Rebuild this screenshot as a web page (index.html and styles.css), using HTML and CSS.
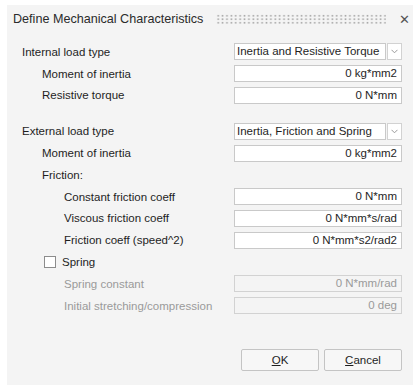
FILE: index.html
```html
<!DOCTYPE html>
<html lang="en">
<head>
    <meta charset="UTF-8">
    <title>Define Mechanical Characteristics</title>
    <link rel="stylesheet" href="styles.css">
</head>
<body>
    <div class="dialog">
        <div class="titlebar">
            <span class="title">Define Mechanical Characteristics</span>
            <span class="grip"></span>
            <span class="close">&#x2715;</span>
        </div>

        <div class="content">
            <div class="row">
                <span class="label">Internal load type</span>
                <div class="select">
                    <span class="select-text">Inertia and Resistive Torque</span>
                    <span class="arrow"><svg width="7" height="5" viewBox="0 0 7 5"><path d="M0.5 0.8 L3.5 3.8 L6.5 0.8" fill="none" stroke="#999" stroke-width="1"/></svg></span>
                </div>
            </div>
            <div class="row">
                <span class="label indent1">Moment of inertia</span>
                <div class="field">0 kg*mm2</div>
            </div>
            <div class="row">
                <span class="label indent1">Resistive torque</span>
                <div class="field">0 N*mm</div>
            </div>

            <div class="row section">
                <span class="label">External load type</span>
                <div class="select">
                    <span class="select-text">Inertia, Friction and Spring</span>
                    <span class="arrow"><svg width="7" height="5" viewBox="0 0 7 5"><path d="M0.5 0.8 L3.5 3.8 L6.5 0.8" fill="none" stroke="#999" stroke-width="1"/></svg></span>
                </div>
            </div>
            <div class="row">
                <span class="label indent1">Moment of inertia</span>
                <div class="field">0 kg*mm2</div>
            </div>
            <div class="row">
                <span class="label indent1">Friction:</span>
            </div>
            <div class="row">
                <span class="label indent2">Constant friction coeff</span>
                <div class="field">0 N*mm</div>
            </div>
            <div class="row">
                <span class="label indent2">Viscous friction coeff</span>
                <div class="field">0 N*mm*s/rad</div>
            </div>
            <div class="row">
                <span class="label indent2">Friction coeff (speed^2)</span>
                <div class="field">0 N*mm*s2/rad2</div>
            </div>
            <div class="row">
                <span class="check"></span>
                <span class="label">Spring</span>
            </div>
            <div class="row">
                <span class="label indent2 disabled">Spring constant</span>
                <div class="field disabled">0 N*mm/rad</div>
            </div>
            <div class="row">
                <span class="label indent2 disabled">Initial stretching/compression</span>
                <div class="field disabled">0 deg</div>
            </div>
        </div>

        <div class="buttons">
            <button class="btn"><u>O</u>K</button>
            <button class="btn"><u>C</u>ancel</button>
        </div>
    </div>
</body>
</html>
```

FILE: styles.css
```css
body {
    margin: 0;
    background: #ffffff;
    font-family: "Liberation Sans", Arial, sans-serif;
    font-size: 11.5px;
    color: #1e1e1e;
}
.dialog {
    margin: 5px 7px 0 7px;
    width: 406px;
    height: 380px;
    background: #f4f4f4;
    display: flex;
    flex-direction: column;
}
.titlebar {
    display: flex;
    align-items: center;
    height: 28px;
    padding: 0 2px 0 6px;
}
.title {
    font-size: 12.6px;
    color: #2b2b2b;
    white-space: nowrap;
}
.grip {
    flex: 1;
    height: 10px;
    margin: 0 11px 0 13px;
    background-image: radial-gradient(circle, #aaaaaa 0.8px, transparent 1.1px);
    background-size: 4.4px 3.5px;
}
.close {
    font-size: 13px;
    color: #555;
    width: 14px;
    text-align: center;
}
.content {
    padding: 8px 11px 0 15px;
    display: flex;
    flex-direction: column;
}
.row {
    display: flex;
    align-items: center;
    height: 21.8px;
    white-space: nowrap;
}
.row.section {
    margin-top: 14px;
}
.label {
    flex: 1;
}
.indent1 {
    padding-left: 20px;
}
.indent2 {
    padding-left: 42px;
}
.disabled {
    color: #9a9a9a;
}
.field {
    width: 168px;
    height: 17px;
    box-sizing: border-box;
    border: 1px solid #c9c9c9;
    background: #ffffff;
    text-align: right;
    padding: 0 4px;
    line-height: 15px;
}
.field.disabled {
    background: #f4f4f4;
    border-color: #d2d2d2;
}
.select {
    width: 168px;
    height: 17px;
    display: flex;
}
.select-text {
    flex: 1;
    box-sizing: border-box;
    border: 1px solid #c9c9c9;
    background: #ffffff;
    padding: 0 2px;
    line-height: 15px;
    overflow: hidden;
}
.arrow {
    width: 15px;
    margin-left: 1px;
    box-sizing: border-box;
    border: 1px solid #d2d2d2;
    background: #ffffff;
    display: flex;
    align-items: center;
    justify-content: center;
}
.check {
    width: 12px;
    height: 12px;
    box-sizing: border-box;
    border: 1px solid #8c8c8c;
    background: #ffffff;
    margin: 0 6px 0 22px;
}
.buttons {
    margin-top: auto;
    padding: 0 11px 14px 0;
    display: flex;
    justify-content: flex-end;
    gap: 5px;
}
.btn {
    width: 78px;
    height: 22px;
    border: 1px solid #c4c4c4;
    border-radius: 2px;
    background: #f7f7f7;
    font-family: "Liberation Sans", Arial, sans-serif;
    font-size: 11.5px;
    color: #1e1e1e;
    padding: 0;
}
```
